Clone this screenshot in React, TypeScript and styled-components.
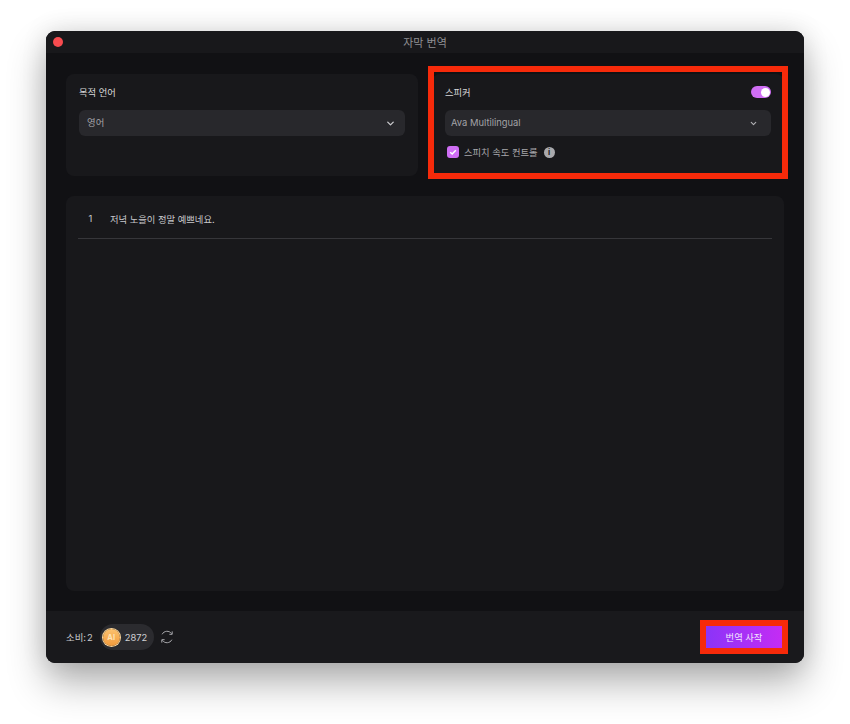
import { ChevronDown } from 'lucide-react';
import styled, { createGlobalStyle } from 'styled-components';

const GlobalStyle = createGlobalStyle`
  html, body {
    margin: 0;
    height: 100%;
    background: #ffffff;
  }
  * {
    box-sizing: border-box;
  }
  body {
    font-family: Inter, "Noto Sans CJK KR", sans-serif;
  }
`;

const Page = styled.div`
  width: 850px;
  height: 724px;
  padding: 31px 46px 0;
  overflow: hidden;
`;

const Window = styled.div`
  width: 758px;
  height: 632px;
  display: flex;
  flex-direction: column;
  background: #111114;
  border-radius: 9px;
  overflow: hidden;
  box-shadow: 0 20px 38px rgba(0, 0, 0, 0.3), 0 0 26px rgba(0, 0, 0, 0.12);
`;

const TitleBar = styled.div`
  position: relative;
  height: 22px;
  flex: none;
  display: flex;
  align-items: center;
  justify-content: center;
  background: #18181b;
  color: #8f8f93;
  font-size: 11px;
`;

const CloseDot = styled.span`
  position: absolute;
  left: 7px;
  top: 6px;
  width: 10px;
  height: 10px;
  border-radius: 50%;
  background: #f74b4f;
`;

const Content = styled.div`
  flex: 1;
  display: flex;
  flex-direction: column;
  gap: 20px;
  padding: 21px 20px 20px;
`;

const TopRow = styled.div`
  display: grid;
  grid-template-columns: 352px 352px;
  gap: 14px;
`;

const Panel = styled.div`
  position: relative;
  height: 102px;
  padding: 11px 13px;
  background: #18181b;
  border-radius: 8px;
`;

const PanelHead = styled.div`
  display: flex;
  align-items: center;
  justify-content: space-between;
  height: 14px;
  margin-bottom: 11px;
`;

const Label = styled.span`
  color: #d8d8da;
  font-size: 9.3px;
`;

const Select = styled.div<{ $textInset: number; $iconInset: number }>`
  height: 26px;
  display: flex;
  align-items: center;
  justify-content: space-between;
  padding: 0 ${({ $iconInset }) => $iconInset}px 2px ${({ $textInset }) => $textInset}px;
  background: #28282c;
  border-radius: 6px;
  color: #a3a3a7;
  font-size: 9.4px;

  svg {
    margin-top: 2px;
  }
`;

const Toggle = styled.span`
  position: relative;
  width: 20px;
  height: 12px;
  border-radius: 6px;
  background: #cf6ef4;

  &::after {
    content: '';
    position: absolute;
    right: 1.5px;
    top: 1.5px;
    width: 9px;
    height: 9px;
    border-radius: 50%;
    background: #ffffff;
  }
`;

const CheckRow = styled.div`
  display: flex;
  align-items: center;
  gap: 5px;
  margin: 9px 0 0 2px;
  color: #a8a8ac;
  font-size: 9.3px;
`;

const CheckBox = styled.span`
  width: 12px;
  height: 12px;
  display: flex;
  align-items: center;
  justify-content: center;
  border-radius: 3px;
  background: #cf6ef4;
`;

const InfoDot = styled.span`
  width: 11px;
  height: 11px;
  margin-left: 1px;
  display: flex;
  align-items: center;
  justify-content: center;
  border-radius: 50%;
  background: #a9a9ad;
  color: #19191d;
  font-size: 8px;
  font-weight: 700;
`;

const HighlightPanel = styled.div`
  position: absolute;
  left: -4px;
  top: -8px;
  right: -4px;
  bottom: -3px;
  border: 6px solid #f62a0a;
  pointer-events: none;
`;

const ListPanel = styled.div`
  flex: 1;
  padding: 0 12px;
  background: #18181b;
  border-radius: 8px;
`;

const ListRow = styled.div`
  height: 43px;
  display: flex;
  align-items: center;
  padding-top: 3px;
  border-bottom: 1px solid #36363a;
  color: #c9c9cc;
  font-size: 9.3px;
`;

const RowIndex = styled.span`
  width: 32px;
  padding-left: 10.5px;
`;

const Footer = styled.div`
  height: 52px;
  flex: none;
  display: flex;
  align-items: center;
  justify-content: space-between;
  padding: 0 22px 0 20px;
  background: #19191c;
`;

const Cost = styled.div`
  display: flex;
  align-items: center;
  color: #c9c9cc;
  font-size: 9.4px;
`;

const CostValue = styled.span`
  margin-left: 1px;
`;

const Balance = styled.div`
  height: 26px;
  width: 54px;
  margin: 0 6px 0 7px;
  display: flex;
  align-items: center;
  gap: 5px;
  padding-left: 3px;
  background: #2b2b2f;
  border-radius: 13px;
  color: #d0d0d3;
`;

const Coin = styled.span`
  width: 17px;
  height: 17px;
  display: flex;
  align-items: center;
  justify-content: center;
  border-radius: 50%;
  background: linear-gradient(180deg, #fbc26f, #f19a3c);
  box-shadow: 0 0 0 1px #fcd79c;
  color: #fde3b5;
  font-size: 7.5px;
  font-weight: 700;
`;

const StartButton = styled.button`
  position: relative;
  width: 76px;
  height: 22px;
  border: none;
  padding: 0;
  background: linear-gradient(90deg, #8b34f8, #c42cf4);
  color: #f2e6fd;
  font-family: inherit;
  font-size: 9.3px;

  &::after {
    content: '';
    position: absolute;
    inset: -6px;
    border: 6px solid #f62a0a;
  }
`;

export default function App() {
  return (
    <Page>
      <GlobalStyle />
      <Window>
        <TitleBar>
          <CloseDot />
          자막 번역
        </TitleBar>
        <Content>
          <TopRow>
            <Panel>
              <PanelHead>
                <Label>목적 언어</Label>
              </PanelHead>
              <Select $textInset={8} $iconInset={9}>
                영어
                <ChevronDown size={11} color="#c8c8cb" strokeWidth={3} />
              </Select>
            </Panel>
            <Panel>
              <PanelHead>
                <Label>스피커</Label>
                <Toggle />
              </PanelHead>
              <Select $textInset={6} $iconInset={13}>
                Ava Multilingual
                <ChevronDown size={9} color="#b0b0b4" strokeWidth={3} />
              </Select>
              <CheckRow>
                <CheckBox>
                  <svg width="8" height="8" viewBox="0 0 8 8" fill="none">
                    <path d="M1.2 4.2 3.2 6 6.8 2.2" stroke="#fff" strokeWidth="1.5" />
                  </svg>
                </CheckBox>
                스피치 속도 컨트롤
                <InfoDot>i</InfoDot>
              </CheckRow>
              <HighlightPanel />
            </Panel>
          </TopRow>
          <ListPanel>
            <ListRow>
              <RowIndex>1</RowIndex>
              저녁 노을이 정말 예쁘네요.
            </ListRow>
          </ListPanel>
        </Content>
        <Footer>
          <Cost>
            소비:<CostValue>2</CostValue>
            <Balance>
              <Coin>AI</Coin>
              2872
            </Balance>
            <svg width="14" height="14" viewBox="0 0 14 14" fill="none" stroke="#a9a9ad" strokeWidth="1">
              <path d="M2.1 4.3A5.6 5.6 0 0 1 11.6 3.6" />
              <path d="M12.2 1.4v2.9H9.4" />
              <path d="M11.9 9.7A5.6 5.6 0 0 1 2.4 10.4" />
              <path d="M1.8 12.6V9.7h2.8" />
            </svg>
          </Cost>
          <StartButton>번역 사작</StartButton>
        </Footer>
      </Window>
    </Page>
  );
}
